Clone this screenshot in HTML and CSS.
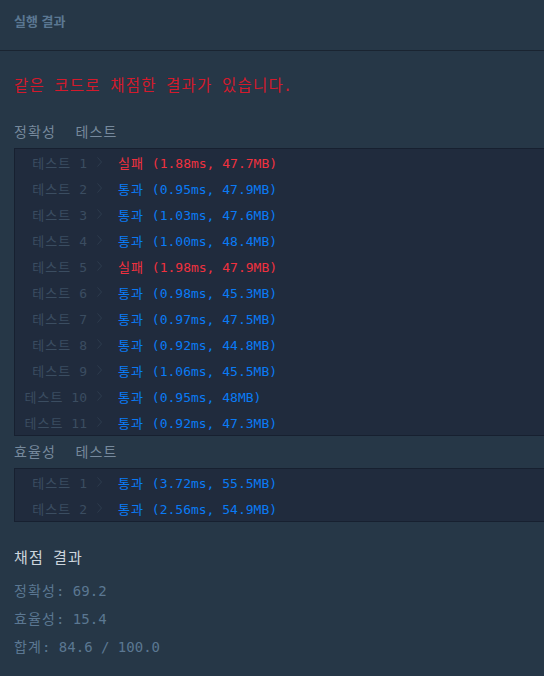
FILE: index.html
```html
<!DOCTYPE html>
<html lang="ko">
<head>
<meta charset="utf-8">
<link rel="stylesheet" href="styles.css">
</head>
<body>
<div class="panel">
  <div class="panel-header">실행 결과</div>
  <div class="panel-body">
    <p class="notice"><span class="ko">같은</span> <span class="ko">코드로</span> <span class="ko">채점한</span> <span class="ko">결과가</span> <span class="ko">있습니</span>다.</p>

    <div class="group-title"><span class="ko">정확성</span> <span class="ko">테스트</span></div>
    <div class="results">
      <div class="row"><span class="label"><span class="ko">테스트</span> 1</span><span class="chev"><svg width="5" height="10" viewBox="0 0 5 10"><path d="M0.5 0.5 L4.5 5 L0.5 9.5" fill="none" stroke="currentColor" stroke-width="1"/></svg></span><span class="fail"><span class="ko">실패</span> (1.88ms, 47.7MB)</span></div>
      <div class="row"><span class="label"><span class="ko">테스트</span> 2</span><span class="chev"><svg width="5" height="10" viewBox="0 0 5 10"><path d="M0.5 0.5 L4.5 5 L0.5 9.5" fill="none" stroke="currentColor" stroke-width="1"/></svg></span><span class="pass"><span class="ko">통과</span> (0.95ms, 47.9MB)</span></div>
      <div class="row"><span class="label"><span class="ko">테스트</span> 3</span><span class="chev"><svg width="5" height="10" viewBox="0 0 5 10"><path d="M0.5 0.5 L4.5 5 L0.5 9.5" fill="none" stroke="currentColor" stroke-width="1"/></svg></span><span class="pass"><span class="ko">통과</span> (1.03ms, 47.6MB)</span></div>
      <div class="row"><span class="label"><span class="ko">테스트</span> 4</span><span class="chev"><svg width="5" height="10" viewBox="0 0 5 10"><path d="M0.5 0.5 L4.5 5 L0.5 9.5" fill="none" stroke="currentColor" stroke-width="1"/></svg></span><span class="pass"><span class="ko">통과</span> (1.00ms, 48.4MB)</span></div>
      <div class="row"><span class="label"><span class="ko">테스트</span> 5</span><span class="chev"><svg width="5" height="10" viewBox="0 0 5 10"><path d="M0.5 0.5 L4.5 5 L0.5 9.5" fill="none" stroke="currentColor" stroke-width="1"/></svg></span><span class="fail"><span class="ko">실패</span> (1.98ms, 47.9MB)</span></div>
      <div class="row"><span class="label"><span class="ko">테스트</span> 6</span><span class="chev"><svg width="5" height="10" viewBox="0 0 5 10"><path d="M0.5 0.5 L4.5 5 L0.5 9.5" fill="none" stroke="currentColor" stroke-width="1"/></svg></span><span class="pass"><span class="ko">통과</span> (0.98ms, 45.3MB)</span></div>
      <div class="row"><span class="label"><span class="ko">테스트</span> 7</span><span class="chev"><svg width="5" height="10" viewBox="0 0 5 10"><path d="M0.5 0.5 L4.5 5 L0.5 9.5" fill="none" stroke="currentColor" stroke-width="1"/></svg></span><span class="pass"><span class="ko">통과</span> (0.97ms, 47.5MB)</span></div>
      <div class="row"><span class="label"><span class="ko">테스트</span> 8</span><span class="chev"><svg width="5" height="10" viewBox="0 0 5 10"><path d="M0.5 0.5 L4.5 5 L0.5 9.5" fill="none" stroke="currentColor" stroke-width="1"/></svg></span><span class="pass"><span class="ko">통과</span> (0.92ms, 44.8MB)</span></div>
      <div class="row"><span class="label"><span class="ko">테스트</span> 9</span><span class="chev"><svg width="5" height="10" viewBox="0 0 5 10"><path d="M0.5 0.5 L4.5 5 L0.5 9.5" fill="none" stroke="currentColor" stroke-width="1"/></svg></span><span class="pass"><span class="ko">통과</span> (1.06ms, 45.5MB)</span></div>
      <div class="row"><span class="label"><span class="ko">테스트</span> 10</span><span class="chev"><svg width="5" height="10" viewBox="0 0 5 10"><path d="M0.5 0.5 L4.5 5 L0.5 9.5" fill="none" stroke="currentColor" stroke-width="1"/></svg></span><span class="pass"><span class="ko">통과</span> (0.95ms, 48MB)</span></div>
      <div class="row"><span class="label"><span class="ko">테스트</span> 11</span><span class="chev"><svg width="5" height="10" viewBox="0 0 5 10"><path d="M0.5 0.5 L4.5 5 L0.5 9.5" fill="none" stroke="currentColor" stroke-width="1"/></svg></span><span class="pass"><span class="ko">통과</span> (0.92ms, 47.3MB)</span></div>
    </div>

    <div class="group-title"><span class="ko">효율성</span> <span class="ko">테스트</span></div>
    <div class="results">
      <div class="row"><span class="label"><span class="ko">테스트</span> 1</span><span class="chev"><svg width="5" height="10" viewBox="0 0 5 10"><path d="M0.5 0.5 L4.5 5 L0.5 9.5" fill="none" stroke="currentColor" stroke-width="1"/></svg></span><span class="pass"><span class="ko">통과</span> (3.72ms, 55.5MB)</span></div>
      <div class="row"><span class="label"><span class="ko">테스트</span> 2</span><span class="chev"><svg width="5" height="10" viewBox="0 0 5 10"><path d="M0.5 0.5 L4.5 5 L0.5 9.5" fill="none" stroke="currentColor" stroke-width="1"/></svg></span><span class="pass"><span class="ko">통과</span> (2.56ms, 54.9MB)</span></div>
    </div>

    <div class="summary">
      <div class="summary-title"><span class="ko">채점</span> <span class="ko">결과</span></div>
      <div class="score"><span class="ko">정확성</span>: 69.2</div>
      <div class="score"><span class="ko">효율성</span>: 15.4</div>
      <div class="score"><span class="ko">합계</span>: 84.6 / 100.0</div>
    </div>
  </div>
</div>
</body>
</html>
```

FILE: styles.css
```css
html, body {
  margin: 0;
  padding: 0;
  background: #263747;
  overflow: hidden;
}

body {
  font-family: "DejaVu Sans Mono", "Noto Sans CJK KR", monospace;
  width: 544px;
  height: 676px;
}

.ko {
  letter-spacing: 0.08em;
}

.panel-header {
  height: 51px;
  box-sizing: border-box;
  padding: 11px 14px 0;
  font-family: "Noto Sans CJK KR", sans-serif;
  font-weight: 700;
  font-size: 13px;
  line-height: 20px;
  color: #5b7792;
  border-bottom: 1px solid #1a2431;
}

.panel-body {
  padding: 0 0 0 14px;
}

.notice {
  margin: 23px 0 18px;
  font-size: 15.5px;
  line-height: 24px;
  color: #d41a2c;
  white-space: pre;
}

.group-title {
  font-size: 14px;
  line-height: 32px;
  color: #76899c;
  white-space: pre;
  word-spacing: 11px;
}

.results {
  background: #202b3d;
  border: 1px solid #172030;
  border-right: 0;
}

.row {
  display: flex;
  align-items: center;
  height: 26px;
  font-size: 13px;
  white-space: pre;
}

.label {
  width: 72px;
  text-align: right;
  color: #3b4d61;
}

.chev {
  width: 31px;
  box-sizing: border-box;
  padding-left: 10px;
  display: flex;
  align-items: center;
  color: #2e3c4e;
}

.pass {
  color: #0a7bf5;
}

.fail {
  color: #f0313f;
}

.summary {
  padding-top: 24px;
}

.summary-title {
  font-size: 15px;
  line-height: 24px;
  color: #cdd5dd;
  margin-bottom: 7px;
}

.score {
  font-size: 14px;
  line-height: 28px;
  color: #5b7792;
  white-space: pre;
}
```
